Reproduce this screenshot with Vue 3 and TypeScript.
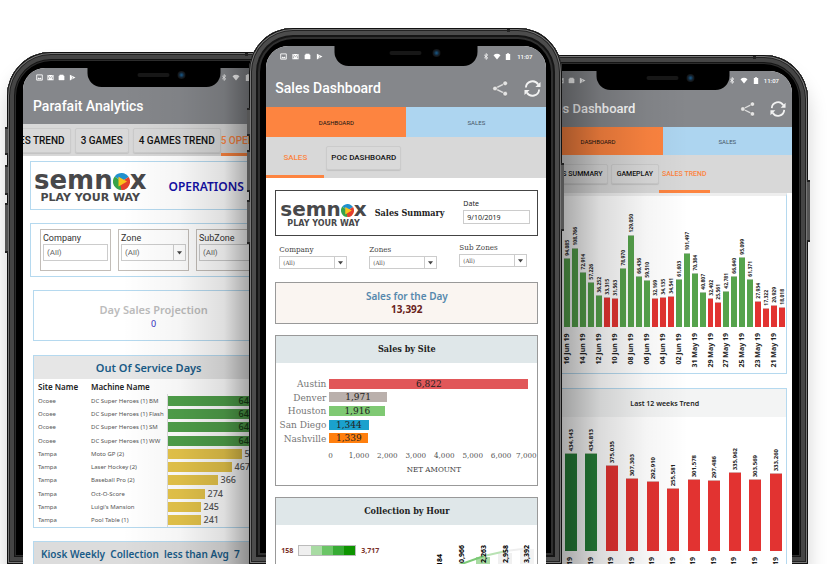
<script setup lang="ts">
interface Phone {
  kind: 'operations' | 'summary' | 'trend'
  title: string
  actions: boolean
}

const phones: Phone[] = [
  { kind: 'operations', title: 'Parafait Analytics', actions: false },
  { kind: 'summary', title: 'Sales Dashboard', actions: true },
  { kind: 'trend', title: 'Sales Dashboard', actions: true },
]

const notices = ['image', 'mail', 'droid', 'play']
const signals = ['bluetooth', 'wifi', 'battery']

interface Machine {
  site: string
  name: string
  days: string
  width: number
  green?: boolean
}

const machines: Machine[] = [
  { site: 'Ocoee', name: 'DC Super Heroes (1) BM', days: '644', width: 91, green: true },
  { site: 'Ocoee', name: 'DC Super Heroes (1) Flash', days: '644', width: 91, green: true },
  { site: 'Ocoee', name: 'DC Super Heroes (1) SM', days: '644', width: 91, green: true },
  { site: 'Ocoee', name: 'DC Super Heroes (1) WW', days: '644', width: 91, green: true },
  { site: 'Tampa', name: 'Moto GP (2)', days: '538', width: 74 },
  { site: 'Tampa', name: 'Laser Hockey (2)', days: '467', width: 64 },
  { site: 'Tampa', name: 'Baseball Pro (2)', days: '366', width: 50 },
  { site: 'Tampa', name: 'Oct-O-Score', days: '274', width: 37 },
  { site: 'Tampa', name: "Luigi's Mansion", days: '245', width: 33 },
  { site: 'Tampa', name: 'Pool Table (1)', days: '241', width: 33 },
]

const sites = [
  { name: 'Austin', amount: 6822, color: '#e15759' },
  { name: 'Denver', amount: 1971, color: '#bab0ac' },
  { name: 'Houston', amount: 1916, color: '#7fc973' },
  { name: 'San Diego', amount: 1344, color: '#1ba1cd' },
  { name: 'Nashville', amount: 1339, color: '#ff7f0e' },
]
const ticks = ['0', '1,000', '2,000', '3,000', '4,000', '5,000', '6,000', '7,000']
const hours = [
  { x: 13, y: 29, label: '7,184' },
  { x: 35, y: 20, label: '10,966' },
  { x: 57, y: 20, label: '12,263' },
  { x: 79, y: 20, label: '12,958' },
  { x: 100, y: 20, label: '13,392' },
]

const daily = [
  94085, 108766, 72914, 57226, 36252, 33315, 31563, 78970, 129050, 66436, 59510, 32169, 34135, 34541,
  61603, 101497, 70384, 40807, 32402, 25561, 42781, 66640, 95099, 61371, 27934, 17322, 20929, 18018,
]
const dates = [
  '16 Jun 19', '14 Jun 19', '12 Jun 19', '10 Jun 19', '08 Jun 19', '06 Jun 19', '04 Jun 19',
  '02 Jun 19', '31 May 19', '29 May 19', '27 May 19', '25 May 19', '23 May 19', '21 May 19',
]
const weekly = [434143, 434813, 375035, 307303, 292910, 255581, 301578, 297486, 335962, 303569, 333260]

const money = (n: number): string => n.toLocaleString('en-US')
const dayHeight = (n: number): string => `${Math.round(8.3 + n * 0.000646)}px`
const weekHeight = (n: number): string => `${Math.round(11.8 + n * 0.000199)}px`
</script>

<template>
  <main class="stage">
    <svg class="defs" aria-hidden="true">
      <symbol id="image" viewBox="0 0 8 8"><path d="M.8 1h6.4v6H.8z" fill="none" stroke="#fff" stroke-width="1" /><path d="M1.5 6 3 4l1.2 1.2L5.3 4 6.5 6z" fill="#fff" /></symbol>
      <symbol id="mail" viewBox="0 0 8 8"><path d="M.5 1h7v6h-7z" fill="#fff" /><path d="M1.6 2 4 4.2 6.4 2M1.8 6V3.8M6.2 6V3.8" fill="none" stroke="#85878b" stroke-width=".8" /></symbol>
      <symbol id="droid" viewBox="0 0 8 8"><path d="M1 2.2h6v4.600H1zM2 1h4v1.200H2z" fill="#fff" stroke="#fff" stroke-width=".5" /></symbol>
      <symbol id="play" viewBox="0 0 8 8"><path d="M1 .8 7.400 4 1 7.500z" fill="#fff" /><path d="m3 2.800 1.600 1.500L2.600 6" fill="none" stroke="#85878b" stroke-width=".7" /></symbol>
      <symbol id="bluetooth" viewBox="0 0 8 8"><path d="m2 2.300 4 3.300L4 7.300V.7l2 1.600-4 3.400" fill="none" stroke="#fff" stroke-width=".9" /></symbol>
      <symbol id="wifi" viewBox="0 0 8 8"><path d="M0 2.500Q4-.7 8 2.500L4 7.500z" fill="#fff" /></symbol>
      <symbol id="battery" viewBox="0 0 8 8"><path d="M1.500 1h1.300V.2h2.400V1h1.300v7h-5z" fill="#fff" /></symbol>
      <symbol id="ball" viewBox="0 0 20 20">
        <path d="M10 10 2 4A10 10 0 0 1 18.500 4.800z" fill="#2091cf" />
        <path d="M10 10 18.500 4.800A10 10 0 0 1 10 20z" fill="#e5402c" />
        <path d="M10 10v10A10 10 0 0 1 2 4z" fill="#36a34a" />
        <path d="M10 20a10 10 0 0 0 7-3L8 12z" fill="#e5402c" />
        <path d="m6.500 4.500 10 5.500-10 6z" fill="#fbc31c" />
      </symbol>
      <symbol id="caret" viewBox="0 0 8 8"><path d="M0 2h8L4 7z" fill="#444" /></symbol>
    </svg>

    <section v-for="phone in phones" :key="phone.kind" class="phone" :class="phone.kind">
      <i class="key key-a"></i><i class="key key-b"></i><i class="key key-c"></i><i class="key key-r"></i>
      <div class="screen">
        <div class="notch"><i class="speaker"></i><i class="lens"></i></div>
        <header class="appbar">
          <div class="status">
            <svg v-for="n in notices" :key="n" class="mini"><use :href="'#' + n" /></svg>
            <span class="spacer"></span>
            <svg v-for="s in signals" :key="s" class="mini signal"><use :href="'#' + s" /></svg>
            <span class="clock">11:07</span>
          </div>
          <div class="titlebar">
            <h1>{{ phone.title }}</h1>
            <template v-if="phone.actions">
              <button class="action" aria-label="Share">
                <svg viewBox="0 0 18 18"><g fill="#e4e4e4" stroke="#666" stroke-width=".5"><path d="M3 9 14 3.500M3 9l11 5.500" stroke="#ddd" stroke-width="1.500" /><circle cx="3.200" cy="9" r="2.500" /><circle cx="14" cy="3.500" r="2.500" /><circle cx="14" cy="14.500" r="2.500" /></g></svg>
              </button>
              <button class="action" aria-label="Refresh">
                <svg viewBox="0 0 18 18"><path d="M2 8a7 7 0 0 1 13-3.200M16 10a7 7 0 0 1-13 3.200" fill="none" stroke="#f2f2f2" stroke-width="2" /><path d="M17.500 2v5.500H12zM.5 16v-5.500H6z" fill="#f2f2f2" /></svg>
              </button>
            </template>
          </div>
        </header>

        <template v-if="phone.kind === 'operations'">
          <nav class="subnav">
            <button class="chip cut">ES TREND</button>
            <button class="chip">3 GAMES</button>
            <button class="chip">4 GAMES TREND</button>
            <button class="chip active">5 OPERATIONS</button>
          </nav>
          <div class="body">
            <div class="card brand">
              <div class="logo"><div class="word">semn<svg><use href="#ball" /></svg>x</div><div class="tag">PLAY YOUR WAY</div></div>
              <h2>OPERATIONS</h2>
            </div>
            <div class="card filters">
              <div class="filter"><label for="op-company">Company</label><input id="op-company" value="(All)" /></div>
              <div class="filter"><label for="op-zone">Zone</label><div class="drop"><select id="op-zone"><option>(All)</option></select><svg><use href="#caret" /></svg></div></div>
              <div class="filter"><label for="op-sub">SubZone</label><div class="drop"><select id="op-sub"><option>(All)</option></select><svg><use href="#caret" /></svg></div></div>
            </div>
            <div class="card projection"><h3>Day Sales Projection</h3><p>0</p></div>
            <div class="card service">
              <h3 class="bar-title">Out Of Service Days</h3>
              <table>
                <thead><tr><th>Site Name</th><th>Machine Name</th><th></th></tr></thead>
                <tbody>
                  <tr v-for="m in machines" :key="m.name">
                    <td>{{ m.site }}</td><td>{{ m.name }}</td>
                    <td class="plot"><div class="measure" :class="{ green: m.green }"><i :style="{ width: m.width + 'px' }"></i><b>{{ m.days }}</b></div></td>
                  </tr>
                </tbody>
              </table>
            </div>
            <div class="card kiosk"><h3 class="bar-title">Kiosk Weekly&nbsp; Collection&nbsp; less than Avg&nbsp; 7</h3></div>
          </div>
        </template>

        <template v-else>
          <nav class="modes"><button class="mode on">DASHBOARD</button><button class="mode">SALES</button></nav>
          <nav v-if="phone.kind === 'summary'" class="subnav">
            <button class="chip active">SALES</button>
            <button class="chip">POC DASHBOARD</button>
          </nav>
          <nav v-else class="subnav">
            <button class="chip cut">S SUMMARY</button>
            <button class="chip">GAMEPLAY</button>
            <button class="chip active">SALES TREND</button>
          </nav>
        </template>

        <div v-if="phone.kind === 'summary'" class="body">
          <div class="box brand">
            <div class="logo"><div class="word">semn<svg><use href="#ball" /></svg>x</div><div class="tag">PLAY YOUR WAY</div></div>
            <h2>Sales Summary</h2>
            <div class="date"><label for="date">Date</label><input id="date" value="9/10/2019" /></div>
          </div>
          <div class="filters">
            <div class="filter"><label for="company">Company</label><div class="drop"><select id="company"><option>(All)</option></select><svg><use href="#caret" /></svg></div></div>
            <div class="filter"><label for="zones">Zones</label><div class="drop"><select id="zones"><option>(All)</option></select><svg><use href="#caret" /></svg></div></div>
            <div class="filter"><label for="subzones">Sub Zones</label><div class="drop"><select id="subzones"><option>(All)</option></select><svg><use href="#caret" /></svg></div></div>
          </div>
          <div class="box today"><h3>Sales for the Day</h3><p>13,392</p></div>
          <div class="box by-site">
            <h3 class="head">Sales by Site</h3>
            <div class="rows">
              <div v-for="s in sites" :key="s.name" class="row">
                <span>{{ s.name }}</span>
                <div class="track"><b :style="{ width: (s.amount / 7130) * 100 + '%', background: s.color }">{{ money(s.amount) }}</b></div>
              </div>
            </div>
            <div class="ticks"><span v-for="t in ticks" :key="t">{{ t }}</span></div>
            <p class="axis">NET AMOUNT</p>
          </div>
          <div class="box by-hour">
            <h3 class="head">Collection by Hour</h3>
            <div class="hourly">
              <div class="scale"><span>158</span><div class="ramp"><i></i><i></i><i></i><i></i><i></i></div><span>3,717</span></div>
              <svg viewBox="0 0 110 60" class="hours">
                <path d="M49 32h14v30H49z" fill="#a9dba3" /><path d="M71 28h14v34H71z" fill="#f0f0f0" /><path d="M93 24h14v38H93z" fill="#f3f3f3" />
                <path d="M29 41 57 31" stroke="#7cc976" stroke-width="2" /><path d="m57 31 22-5" stroke="#b9e2b4" stroke-width="2" /><path d="m79 26 24-3" stroke="#eee" stroke-width="2" />
                <text v-for="h in hours" :key="h.label" text-anchor="end" :transform="`translate(${h.x + 2} ${h.y}) rotate(-90)`">{{ h.label }}</text>
              </svg>
            </div>
          </div>
        </div>

        <div v-if="phone.kind === 'trend'" class="body">
          <div class="card days">
            <div class="cols">
              <div v-for="d in daily" :key="d" class="col"><span>{{ money(d) }}</span><i :class="{ low: d < 36000 }" :style="{ height: dayHeight(d) }"></i></div>
            </div>
            <div class="dates"><span v-for="d in dates" :key="d">{{ d }}</span></div>
          </div>
          <div class="card weeks">
            <h3>Last 12 weeks Trend</h3>
            <div class="cols">
              <div v-for="w in weekly" :key="w" class="col"><span>{{ money(w) }}</span><i :class="{ low: w < 400000 }" :style="{ height: weekHeight(w) }"></i></div>
            </div>
            <div class="dates"><span v-for="w in weekly" :key="w">19</span></div>
          </div>
        </div>
      </div>
    </section>
  </main>
</template>

<style>
body { background: #fff; overflow: hidden; }
</style>

<style scoped>
* { box-sizing: border-box; margin: 0; }
button, input, select { font: inherit; color: inherit; border: 0; padding: 0; margin: 0; background: none; border-radius: 0; white-space: nowrap; }
.defs { position: absolute; width: 0; height: 0; }
.stage { display: flex; height: 100vh; padding: 0 23px 0 7px; overflow: hidden; font-family: Roboto, sans-serif; color: #222; }

.phone {
  position: relative; flex: 293 1 0; min-width: 0; margin-top: 52px; padding: 16px 16px 0; background: #000;
  border-radius: 44px 44px 0 0;
  box-shadow: inset 0 0 0 1px #111, inset 0 0 0 2px #777, inset 0 0 0 3px #222, inset 0 0 0 7px #454545, inset 0 0 0 8px #151515, inset 0 0 0 9px #2c2c2c, 0 16px 20px rgba(0, 0, 0, .18);
}
.summary { flex: 314 1 0; z-index: 2; margin: 28px -45px 0 -51px; padding: 18px 16px 0 17px; box-shadow: inset 0 0 0 1px #111, inset 0 0 0 2px #777, inset 0 0 0 3px #222, inset 0 0 0 7px #4c4c4c, inset 0 0 0 9px #151515, inset 0 0 0 11px #303030; }
.trend { flex: 290 1 0; margin-top: 55px; }
.phone::before { content: ""; position: absolute; top: 1px; right: 52px; width: 3px; height: 3px; background: #222; }
.key { position: absolute; left: -2px; width: 3px; background: #555; border: 1px solid #222; border-width: 2px 0; }
.key-a { top: 75px; height: 28px; }
.key-b { top: 113px; height: 30px; }
.key-c { top: 151px; height: 50px; }
.key-r { left: auto; right: -2px; top: 125px; height: 62px; }
.summary .key-a { top: 80px; }
.summary .key-b { top: 122px; height: 42px; }
.summary .key-c { top: 172px; height: 44px; }
.summary .key-r { top: 135px; height: 68px; }
.screen { position: relative; height: 100%; overflow: hidden; background: #fff; border-radius: 22px 22px 0 0; }
.operations .screen::after, .trend .screen::after { content: ""; position: absolute; inset: 0; pointer-events: none; }
.operations .screen::after { background: linear-gradient(90deg, transparent 38%, rgba(0, 0, 0, .04) 60%, rgba(0, 0, 0, .13) 77%, rgba(0, 0, 0, .38) 88%); }
.trend .screen::after { background: linear-gradient(90deg, rgba(0, 0, 0, .36) 10%, rgba(0, 0, 0, .14) 26%, rgba(0, 0, 0, .04) 44%, transparent 60%); }

.notch { position: absolute; z-index: 1; top: -4px; left: 50%; width: 133px; height: 23px; transform: translateX(-50%); background: #000; border-radius: 0 0 14px 14px; }
.summary .notch { width: 143px; height: 24px; }
.speaker { position: absolute; left: 38%; top: 9px; width: 32px; height: 4px; border-radius: 2px; background: #171717; }
.lens { position: absolute; left: 68%; top: 7px; width: 8px; height: 8px; border-radius: 50%; background: radial-gradient(#174f78 10%, #14222f 45%, #131313 70%); }

.appbar { background: #85878b; height: 56px; color: #fff; }
.summary .appbar { height: 61px; }
.status { display: flex; align-items: center; gap: 4px; height: 18px; padding: 0 13px; }
.summary .status { height: 20px; padding: 0 14px; gap: 5px; }
.mini { width: 7px; height: 7px; flex: none; }
.signal { margin-left: -2px; width: 8px; }
.operations .signal, .trend .signal { margin-left: 0; }
.spacer { flex: 1; }
.clock { font-size: 6px; font-weight: 500; }
.titlebar { display: flex; align-items: center; gap: 15px; height: 40px; padding: 0 6px 0 10px; }
.trend .titlebar { padding: 0 6px 0 4px; gap: 14px; }
.summary .titlebar { height: 44px; padding: 0 5px 0 9px; }
h1 { flex: 1; font-size: 14px; line-height: 18px; font-weight: 500; white-space: nowrap; }
.trend h1 { font-size: 13px; }
.action { width: 17px; height: 17px; display: block; flex: none; }
.trend .action { width: 16px; height: 16px; }
.action svg { display: block; width: 100%; height: 100%; }

.modes { display: flex; height: 28px; }
.summary .modes { height: 30px; }
.mode { flex: 1; font-size: 6px; color: #456; background: #add5f0; }
.mode.on { background: #fd8440; color: #111; }
.subnav { display: flex; align-items: center; position: relative; background: #d8d8d8; height: 38px; gap: 4px; font-size: 7px; }
.chip { flex: none; height: 20px; padding: 0 6px; font-weight: 500; color: #111; border: 1px solid #cbcbcb; border-radius: 2px; background: #d9d9d9; box-shadow: 0 1px 1px rgba(0, 0, 0, .1); }
.chip.active { height: 100%; color: #fd8440; border: 0; border-bottom: 3px solid #fd8440; border-radius: 0; box-shadow: none; background: none; padding-top: 3px; }
.operations .subnav { height: 32px; font-size: 10px; }
.operations .chip { height: 25px; padding: 0 5px; }
.operations .chip.active { height: 100%; padding: 3px 0 0; margin-left: -4px; }
.operations .chip.cut { padding-left: 0; border-left: 0; margin-left: -4px; }
.summary .subnav { height: 41px; gap: 2px; font-size: 8px; }
.summary .chip { height: 24px; padding: 0 4px; }
.summary .chip.active { height: 100%; width: 58px; padding-top: 3px; }
.trend .subnav { padding-left: 25px; gap: 3px; }
.trend .chip { padding: 0 5px; }
.trend .chip.cut { padding: 0 4px 0 3px; }
.trend .chip.active { padding: 3px 3px 0; margin-left: -3px; }

.logo { font-family: "DejaVu Sans", sans-serif; font-weight: 700; color: #48484a; text-align: center; white-space: nowrap; }
.word { font-size: 20px; line-height: 19px; }
.word svg { width: 13px; height: 13px; vertical-align: -1px; }
.tag { font-size: 8px; line-height: 10px; }
.operations .word { font-size: 26px; line-height: 22px; }
.operations .word svg { width: 17px; height: 17px; }
.operations .tag { font-size: 11px; line-height: 14px; }
.filter label { display: block; white-space: nowrap; }
.drop { position: relative; display: flex; border: 1px solid #ccc; }
.drop select { flex: 1; width: 100%; appearance: none; padding-left: 3px; }
.drop svg { position: absolute; right: 0; top: 0; width: 12px; height: 100%; padding: 0 3px; border-left: 1px solid #ccc; pointer-events: none; }

.operations .body { padding: 5px 10px 0; font-family: "Noto Sans", sans-serif; }
.card { border: 1px solid #b5d9ef; }
.operations .brand { display: flex; align-items: center; gap: 22px; height: 49px; margin-left: -3px; padding: 3px 3px 0; overflow: hidden; }
.operations .brand h2 { font-size: 12px; line-height: 16px; font-weight: 600; color: #1410a8; }
.operations .filters { display: flex; align-items: flex-start; gap: 7px; height: 54px; margin: 13px 0 0 -3px; padding: 5px 0 0 9px; font: 9px Roboto, sans-serif; overflow: hidden; }
.operations .filter { flex: none; width: 71px; height: 42px; padding: 2px 2px 0; border: 1px solid #c2bdb8; color: #333; }
.operations .filter label { line-height: 12px; }
.operations .filter input, .operations .drop { width: 100%; height: 17px; border: 1px solid #ccc; color: #666; font-size: 8px; }
.operations .filter input { padding-left: 3px; }
.operations .projection { height: 51px; margin-top: 13px; padding-top: 11px; text-align: center; }
.projection h3 { font-size: 11px; line-height: 16px; font-weight: 600; color: #bcbcbc; }
.projection p { font-size: 9px; line-height: 12px; color: #3430c0; }
.bar-title { height: 23px; font-size: 11px; line-height: 24px; font-weight: 600; text-align: center; color: #195b87; background: #e6e6e6; white-space: nowrap; padding-right: 10px; }
.service { height: 173px; margin-top: 14px; overflow: hidden; }
table { width: 100%; height: 148px; border-collapse: collapse; table-layout: fixed; font-size: 6px; }
th { width: 53px; text-align: left; font-size: 8px; line-height: 12px; padding: 0 0 0 4px; font-weight: 600; height: 15px; white-space: nowrap; }
th:nth-child(2) { width: 80px; }
th:nth-child(3) { width: auto; }
td { padding: 0 0 0 4px; line-height: 8px; color: #555; white-space: nowrap; }
td.plot { padding: 0; border-left: 1px solid #ddd; overflow: hidden; }
.measure { display: flex; align-items: center; height: 10px; gap: 3px; }
.measure i { flex: none; height: 10px; background: #e5c44a; }
.measure b { font-size: 9px; font-weight: 500; }
.measure.green i { background: #4f9f4a; }
.measure.green b { margin-left: -23px; color: #163c14; }
.kiosk { height: 60px; margin-top: 13px; background: #dcdcdc; }
.kiosk .bar-title { background: none; text-align: left; padding-left: 7px; font-size: 10px; }

.summary .body { padding: 12px 8px 0 9px; font-family: "DejaVu Serif Condensed", "DejaVu Serif", serif; }
.box { border: 1px solid #999; }
.summary .brand { display: flex; align-items: center; gap: 8px; height: 46px; padding: 2px 7px 0 4px; border: 1px solid #444; }
.summary .brand h2 { font-size: 9px; line-height: 12px; flex: 1; white-space: nowrap; padding-bottom: 3px; }
.date { width: 67px; font: 7px "Noto Sans", sans-serif; padding-bottom: 6px; }
.date label { display: block; line-height: 12px; }
.date input { display: block; width: 100%; height: 14px; border: 1px solid #ccc; padding-left: 3px; }
.summary .filters { display: flex; justify-content: space-between; height: 46px; padding: 7px 11px 0 4px; }
.summary .filter { width: 68px; color: #444; }
.summary .filter:last-child { margin-top: -2px; }
.summary .filter label { line-height: 13px; font-size: 8px; }
.summary .drop { height: 13px; font-size: 6px; }
.today { height: 42px; background: #faf5f1; text-align: center; font-family: "Noto Sans", sans-serif; padding-top: 6px; }
.today h3 { font-size: 10px; line-height: 14px; font-weight: 600; color: #5688ad; }
.today p { font-size: 10px; line-height: 13px; font-weight: 700; color: #69231b; }
.head { height: 27px; font-size: 9px; line-height: 27px; background: #dfe7e9; text-align: center; }
.by-site { height: 151px; margin-top: 11px; }
.rows { display: grid; grid-auto-rows: 1fr; height: 68px; margin-top: 14px; font-size: 10px; }
.row { display: flex; align-items: center; gap: 3px; }
.row > span { width: 50px; text-align: right; color: #777; white-space: nowrap; }
.track { flex: 1; }
.track b { display: block; height: 10px; line-height: 10px; font-weight: 500; text-align: center; color: #222; }
.ticks { display: grid; grid-template-columns: repeat(7, 1fr) 22px; margin: 5px 0 0 40px; font-size: 8px; line-height: 12px; color: #555; text-align: center; }
.axis { font-size: 8px; line-height: 12px; text-align: center; padding: 2px 0 0 54px; color: #444; }
.by-hour { height: 100px; margin-top: 11px; overflow: hidden; }
.hourly { display: flex; justify-content: space-between; align-items: flex-start; }
.scale { display: flex; align-items: center; gap: 5px; margin: 20px 0 0 5px; font: 700 7px "Noto Sans", sans-serif; color: #7a3128; }
.ramp { display: flex; width: 58px; height: 11px; border: 1px solid #bbb; }
.ramp i { flex: 1; background: #efefef; }
.ramp i:nth-child(2) { background: #a8dba3; }
.ramp i:nth-child(3) { background: #6bc566; }
.ramp i:nth-child(4) { background: #37ab34; }
.ramp i:nth-child(5) { background: #0e9400; }
.hours { width: 110px; height: 60px; flex: none; font: 700 7px "Noto Sans", sans-serif; }

.trend .body { padding: 0 5px 0 10px; font-family: "Noto Sans", sans-serif; }
.days { height: 181px; border-top: 3px solid #eee; border-left: 0; padding-left: 20px; }
.cols { display: flex; align-items: flex-end; height: 131px; }
.col { flex: 1 1 0; min-width: 0; display: flex; flex-direction: column; align-items: center; }
.col span, .dates span { writing-mode: vertical-rl; transform: rotate(180deg); white-space: nowrap; font-weight: 700; color: #222; }
.col span { font-size: 5px; line-height: 8px; margin-bottom: 2px; }
.col i { width: 75%; background: #56a34c; border: 1px solid #a8c4a4; border-width: 1px 0 0; }
.col i.low { background: #e23331; border-color: #d9a5a3; }
.dates { display: flex; margin-top: 6px; }
.dates span { flex: 1 1 0; min-width: 0; font-size: 7px; line-height: 8px; display: flex; align-items: center; justify-content: flex-end; }
.days .dates { margin: 6px 4px 0 -4px; }
.weeks { margin-top: 14px; height: 200px; padding-left: 17px; border-left: 0; overflow: hidden; }
.weeks h3 { height: 28px; margin-left: -17px; font-size: 7px; line-height: 29px; text-align: center; background: #f3f4f4; font-weight: 600; }
.weeks .cols { height: 134px; }
.weeks .col span { font-size: 6px; }
.weeks .col i { width: 12px; background: #278039; }
.weeks .col i.low { background: #e23331; }
</style>
